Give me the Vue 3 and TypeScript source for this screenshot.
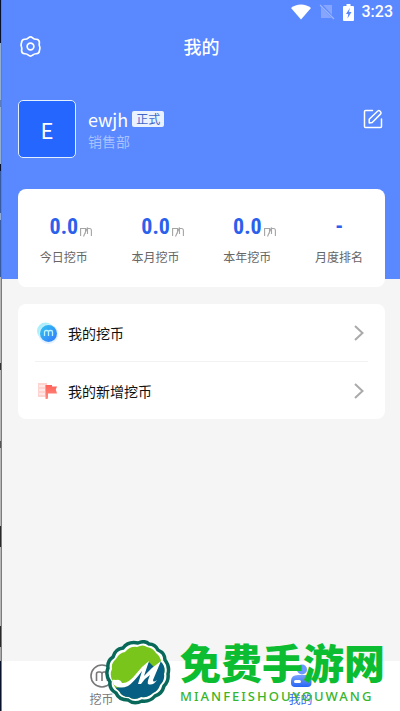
<script setup lang="ts">
interface Stat {
  value: string
  label: string
  unit: boolean
}

const user = { initial: 'E', name: 'ewjh', status: '正式', department: '销售部' }

const stats: Stat[] = [
  { value: '0.0', label: '今日挖币', unit: true },
  { value: '0.0', label: '本月挖币', unit: true },
  { value: '0.0', label: '本年挖币', unit: true },
  { value: '-', label: '月度排名', unit: false },
]
</script>

<template>
  <div class="screen">
    <div class="edge"></div>
    <div class="app">
      <header class="hero">
        <div class="status">
          <svg width="20" height="16" viewBox="0 0 20 16">
            <path d="M0 4C5-.8 15-.8 20 4L10 15.500Z" fill="#fff" />
          </svg>
          <svg width="16" height="16" viewBox="0 0 16 16">
            <path d="M2 3 12.500 14H2ZM4 1h9v10Z" fill="#86a5ff" />
            <path d="M1 1 15 15" stroke="#9bb5ff" stroke-width="1.200" />
          </svg>
          <svg width="11" height="17" viewBox="0 0 11 17">
            <path d="M3.500 0h4v2H10q1 0 1 1v13q0 1-1 1H1q-1 0-1-1V3q0-1 1-1h2.500Z" fill="#fff" />
            <path d="M6.800 4 3 10h2.200L4.500 14.500 8.500 8H6Z" fill="#5988ff" />
          </svg>
          <time>3:23</time>
        </div>

        <div class="titlebar">
          <button class="icon-button" type="button" aria-label="设置">
            <svg width="21" height="21" viewBox="0 0 20 20" fill="none" stroke="#fff" stroke-width="1.600" stroke-linejoin="round">
              <path d="M8 1.700Q10 0 12 1.700 13.500 3.200 15.500 3.100 18.500 3.300 18.500 6.200 18 8.500 18.700 10 19.300 11.500 18.500 13.800 18.500 16.700 15.500 16.900 13.500 16.800 12 18.300 10 20 8 18.300 6.500 16.800 4.500 16.900 1.500 16.700 1.500 13.800 2 11.500 1.300 10 .7 8.500 1.500 6.200 1.500 3.300 4.500 3.100 6.500 3.200 8 1.700Z" />
              <circle cx="10" cy="10" r="3.200" />
            </svg>
          </button>
          <h1>我的</h1>
          <span></span>
        </div>

        <section class="profile">
          <div class="avatar">{{ user.initial }}</div>
          <div class="who">
            <div class="name-row">
              <span class="name">{{ user.name }}</span>
              <span class="tag">{{ user.status }}</span>
            </div>
            <span class="dept">{{ user.department }}</span>
          </div>
          <button class="icon-button edit" type="button" aria-label="编辑">
            <svg width="20" height="20" viewBox="0 0 20 20" fill="none" stroke="#fff" stroke-width="1.500" stroke-linejoin="round" stroke-linecap="round">
              <path d="M9.500 1.500H2.500q-1 0-1 1v15q0 1 1 1h15q1 0 1-1V10" />
              <path d="M6.200 14V10.300L14.800 2q1-.8 2 0l.9 1q.8 1 0 1.900L9.200 13.500Z" />
            </svg>
          </button>
        </section>
      </header>

      <main>
        <section class="card stats">
          <div v-for="s in stats" :key="s.label" class="stat">
            <div class="figure">
              <strong>{{ s.value }}</strong>
              <svg v-if="s.unit" width="12" height="12" viewBox="0 0 12 12" fill="none" stroke="#a5a5a5" stroke-width="1.100">
                <path d="M.6 11V3.500H5.500V8.500M3.500 11.500 7.500 2.500V9M7.500 3.500H9.500Q11.400 3.500 11.400 5.500V11" />
              </svg>
            </div>
            <span class="caption">{{ s.label }}</span>
          </div>
        </section>

        <nav class="card menu" aria-label="我的挖币">
          <a href="#coins">
            <svg width="22" height="22" viewBox="0 0 22 22">
              <defs>
                <linearGradient id="coin" x1="0" y1="0" x2="1" y2="1">
                  <stop offset="0" stop-color="#31c7ee" />
                  <stop offset="1" stop-color="#3577ff" />
                </linearGradient>
              </defs>
              <circle cx="8.500" cy="9" r="8.500" fill="#aceffb" />
              <circle cx="11.500" cy="12" r="10" fill="#d9ecff" fill-opacity=".7" />
              <circle cx="11.500" cy="11.500" r="8.500" fill="url(#coin)" />
              <path d="M7.500 14V10q0-1.500 1.500-1.500h1q1.500 0 1.500 1.500v4M11.500 10q0-1.500 1.500-1.500h1q1.500 0 1.500 1.500v4" fill="none" stroke="#b8f3ff" stroke-width="1.300" />
            </svg>
            <span>我的挖币</span>
            <svg class="arrow" width="10" height="16" viewBox="0 0 10 16"><path d="m1 1 7.500 7L1 15" /></svg>
          </a>
          <a href="#new-coins">
            <svg width="22" height="22" viewBox="0 0 22 22">
              <defs>
                <linearGradient id="flag" x1="0" y1="0" x2="0" y2="1">
                  <stop offset="0" stop-color="#ff625a" />
                  <stop offset="1" stop-color="#ff8c80" />
                </linearGradient>
              </defs>
              <path d="M1 3h9v14H1Z" fill="#ffd3cf" />
              <path d="M2 6h6M2 10h6M2 14h6" stroke="#fff0ee" stroke-width="1.500" />
              <path d="M8.500 5h6.500v1.500h5L18.800 9.500 20 13.500h-9V18q0 1-1 1H8.500Z" fill="url(#flag)" />
            </svg>
            <span>我的新增挖币</span>
            <svg class="arrow" width="10" height="16" viewBox="0 0 10 16"><path d="m1 1 7.500 7L1 15" /></svg>
          </a>
        </nav>
      </main>

      <nav class="tabs" aria-label="主导航">
        <a href="#mine">
          <svg width="24" height="24" viewBox="0 0 24 24" fill="none" stroke="#777" stroke-width="1.600">
            <circle cx="12" cy="12" r="11" />
            <path d="M6.500 17V10Q6.500 8 8.500 8H10Q12 8 12 10v7M12 10q0-2 2-2h1.500q2 0 2 2v7" />
          </svg>
          <span>挖币</span>
        </a>
        <a href="#me" class="active" aria-current="page">
          <svg width="24" height="24" viewBox="0 0 24 24">
            <defs>
              <linearGradient id="person" x1="0" y1="0" x2="0" y2="1">
                <stop offset="0" stop-color="#7ba3ff" />
                <stop offset="1" stop-color="#2765f4" />
              </linearGradient>
            </defs>
            <circle cx="13" cy="5.500" r="5" fill="#6c98ff" />
            <path d="M9 11h11q2.500 0 2.500 3v5q0 4-4 4H6q-4 0-4-4v-2q0-6 7-6Z" fill="url(#person)" />
            <rect x="5" y="16" width="7" height="3" rx="1.500" fill="#fff" />
          </svg>
          <span>我的</span>
        </a>
      </nav>
    </div>

    <div class="brand">
      <svg width="68" height="66" viewBox="0 0 68 66">
        <defs>
          <clipPath id="seal">
            <path d="M33 7Q39 4 43 7 49 8 52 13 57 17 57 22 62 27 60 34 61 40 56 45 54 51 49 53 44 58 37 57 30 61 25 57 18 57 15 51 10 48 9 42 5 35 8 29 7 23 12 19 15 13 21 12 26 6 33 7Z" />
          </clipPath>
        </defs>
        <path d="M34 3Q41 0 45 4 51 4 54 10 61 13 61 20 66 26 64 34 65 41 60 46 58 54 51 56 46 62 38 61 30 65 24 60 15 60 12 53 5 49 6 42 1 35 4 28 3 21 9 17 11 9 19 8 24 1 34 3Z" fill="#fff" stroke="#08695a" stroke-width="3.500" />
        <g clip-path="url(#seal)">
          <path d="M0 0h68v66H0Z" fill="#7ac51c" />
          <path d="M0 47Q22 52 33 34L45 22 50 27 57 21 68 22V66H0Z" fill="#075f83" />
          <path d="M4 41Q9 39 12 40 16 39 18 43 24 44 32 34 38 26 45 21L40 36Q48 27 57 21L49 40Q49 43 53 40 49 46 44 44 43 42 46 35 41 38 37 44L34 44 38 31Q30 42 24 46 15 50 9 44L4 43Z" fill="#fff" />
        </g>
      </svg>
      <div class="brand-text">
        <strong>免费手游网</strong>
        <span>MIANFEISHOUYOUWANG</span>
      </div>
    </div>
  </div>
</template>

<style>
body {
  margin: 0;
  background: #f5f5f5;
}
</style>

<style scoped>
* {
  box-sizing: border-box;
}

.screen {
  position: relative;
  display: flex;
  min-height: 100vh;
  overflow: hidden;
  font-family: "Noto Sans CJK SC", sans-serif;
  color: #111;
}

.edge {
  width: 2px;
  border-right: 1px solid #777d88;
  background: linear-gradient(#07112c 0 6%, #91add2 6% 14%, #5c7db8 14% 15%, #91add2 15% 23%, #07112c 23% 24%, #385a9e 24% 30%, #91add2 30% 31%, #385a9e 31% 39%, #b7b7b7 39% 51%, #333 51% 52%, #b7b7b7 52% 62%, #555 62% 63%, #b7b7b7 63% 74%, #292929 74% 77%, #b7b7b7 77% 88%, #292929 88% 91%, #aaa 91% 93%, #07112c 93%);
}

.app {
  flex: 1;
  display: flex;
  flex-direction: column;
  background: #f5f5f5;
}

a {
  color: inherit;
  text-decoration: none;
}

svg {
  display: block;
  flex: none;
}

.hero {
  height: 279px;
  padding: 0 15px 0 16px;
  background: #5988ff;
  color: #fff;
}

.status {
  display: flex;
  align-items: center;
  justify-content: flex-end;
  gap: 8px;
  height: 24px;
  margin-right: -8px;
}

.status time {
  font: 500 16px/24px Roboto, sans-serif;
}

.titlebar {
  display: grid;
  grid-template-columns: 24px 1fr 24px;
  align-items: center;
  height: 44px;
}

h1 {
  margin: 0;
  font-size: 18px;
  line-height: 24px;
  font-weight: 500;
  text-align: center;
}

.icon-button {
  display: grid;
  place-items: center;
  width: 24px;
  height: 24px;
  padding: 0;
  border: 0;
  background: none;
}

.profile {
  display: flex;
  gap: 12px;
  margin-top: 32px;
}

.avatar {
  width: 58px;
  height: 58px;
  border: 1px solid #e3f0ff;
  border-radius: 5px;
  background: #2566ff;
  font-size: 22px;
  line-height: 56px;
  text-align: center;
}

.who {
  flex: 1;
  padding-top: 8px;
}

.name-row {
  display: flex;
  align-items: center;
  gap: 4px;
  height: 22px;
}

.name {
  font-size: 18px;
}

.tag {
  padding: 0 4px;
  border-radius: 2px;
  background: #eaf1ff;
  color: #3f68c9;
  font-size: 12px;
  line-height: 16px;
}

.dept {
  display: block;
  color: #a9c2ff;
  font-size: 14px;
  line-height: 22px;
}

.edit {
  margin-top: 7px;
}

main {
  flex: 1;
  margin-top: -90px;
  padding: 0 15px 0 16px;
}

.card {
  border-radius: 8px;
  background: #fff;
}

.stats {
  display: grid;
  grid-template-columns: repeat(4, 1fr);
  height: 98px;
  padding-top: 22px;
}

.stat {
  text-align: center;
}

.figure {
  display: flex;
  align-items: flex-end;
  justify-content: center;
  gap: 2px;
  height: 34px;
  padding-bottom: 8px;
  margin-left: 14px;
}

.stat:last-child .figure {
  margin-left: 0;
}

.figure strong {
  color: #2b5fec;
  font: 700 22px/20px "Liberation Sans Narrow", "Roboto Condensed", Roboto, sans-serif;
}

.caption {
  display: block;
  color: #666;
  font-size: 12px;
  line-height: 24px;
}

.menu {
  margin-top: 17px;
  padding: 0 17px;
}

.menu a {
  display: flex;
  align-items: center;
  gap: 9px;
  height: 57px;
  padding-left: 2px;
  font-size: 14px;
}

.menu a + a {
  height: 58px;
  border-top: 1px solid #f2f2f2;
}

.arrow {
  margin: 0 4px 0 auto;
  fill: none;
  stroke: #aaa;
  stroke-width: 2;
}

.tabs {
  display: grid;
  grid-template-columns: 1fr 1fr;
  height: 50px;
  background: #fff;
}

.tabs a {
  display: flex;
  flex-direction: column;
  align-items: center;
  padding-top: 3px;
  color: #777;
  font-size: 12px;
  line-height: 22px;
}

.tabs .active {
  color: #3568ed;
}

.brand {
  position: absolute;
  right: 13px;
  bottom: 5px;
  display: flex;
  gap: 8px;
  pointer-events: none;
}

.brand-text {
  display: flex;
  flex-direction: column;
  gap: 6px;
  width: 207px;
  color: #0cbd31;
}

.brand-text strong {
  font-size: 41px;
  line-height: 42px;
  font-weight: 900;
  white-space: nowrap;
}

.brand-text span {
  color: #38b52b;
  font: 500 13px/16px "Noto Sans", sans-serif;
  letter-spacing: 2px;
}
</style>
